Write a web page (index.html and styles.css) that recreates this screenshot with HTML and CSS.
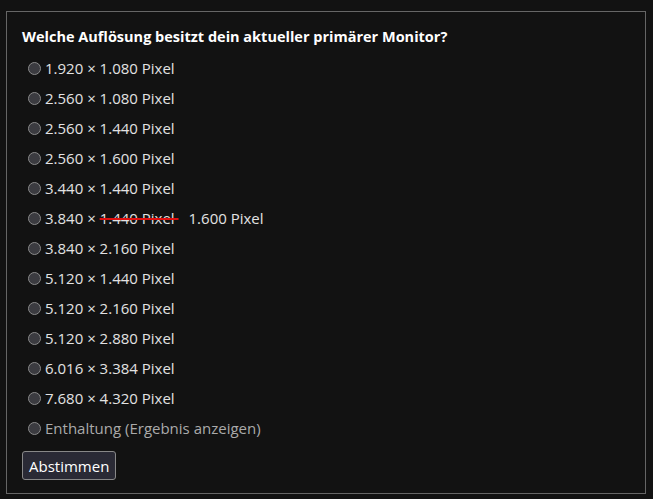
FILE: index.html
```html
<!DOCTYPE html>
<html lang="de">
<head>
<meta charset="utf-8">
<link rel="stylesheet" href="styles.css">
</head>
<body>
<form class="poll">
  <div class="question">Welche Auflösung besitzt dein aktueller primärer Monitor?</div>
  <ul class="options">
    <li class="option"><span class="radio"></span><span>1.920 × 1.080 Pixel</span></li>
    <li class="option"><span class="radio"></span><span>2.560 × 1.080 Pixel</span></li>
    <li class="option"><span class="radio"></span><span>2.560 × 1.440 Pixel</span></li>
    <li class="option"><span class="radio"></span><span>2.560 × 1.600 Pixel</span></li>
    <li class="option"><span class="radio"></span><span>3.440 × 1.440 Pixel</span></li>
    <li class="option"><span class="radio"></span><span>3.840 × <del class="old">1.440 Pixel&nbsp;</del><span class="new">1.600 Pixel</span></span></li>
    <li class="option"><span class="radio"></span><span>3.840 × 2.160 Pixel</span></li>
    <li class="option"><span class="radio"></span><span>5.120 × 1.440 Pixel</span></li>
    <li class="option"><span class="radio"></span><span>5.120 × 2.160 Pixel</span></li>
    <li class="option"><span class="radio"></span><span>5.120 × 2.880 Pixel</span></li>
    <li class="option"><span class="radio"></span><span>6.016 × 3.384 Pixel</span></li>
    <li class="option"><span class="radio"></span><span>7.680 × 4.320 Pixel</span></li>
    <li class="option abstain"><span class="radio"></span><span>Enthaltung (Ergebnis anzeigen)</span></li>
  </ul>
  <button type="button" class="vote">Abstimmen</button>
</form>
</body>
</html>
```
FILE: styles.css
```css
html, body {
  margin: 0;
  padding: 0;
  background: #121212;
}
body {
  font-family: "Open Sans", "Noto Sans", sans-serif;
  color: #e2e2e2;
  padding: 11px 7px 5px 6px;
}
.poll {
  border: 1px solid #666;
  height: 483px;
  box-sizing: border-box;
  padding: 15px 15px 0 15px;
}
.question {
  font-weight: bold;
  font-size: 14.5px;
  color: #ffffff;
  line-height: 20px;
}
.options {
  list-style: none;
  margin: 6px 0 0 0;
  padding: 0;
}
.option {
  display: flex;
  align-items: center;
  height: 30px;
  font-size: 15px;
  padding-left: 6px;
}
.radio {
  width: 11px;
  height: 11px;
  border-radius: 50%;
  border: 1px solid #8a8a8a;
  background: #3b3b40;
  margin-right: 4px;
  flex: none;
}
.old {
  text-decoration: line-through;
  text-decoration-color: #e01010;
  text-decoration-thickness: 2px;
}
.new {
  margin-left: 10px;
}
.abstain {
  color: #aaaaaa;
}
.vote {
  margin-top: 8px;
  font-family: inherit;
  font-size: 15px;
  color: #ffffff;
  background: #2a2a35;
  border: 1px solid #888;
  border-radius: 3px;
  padding: 2px 6px;
  height: 29px;
}
```
